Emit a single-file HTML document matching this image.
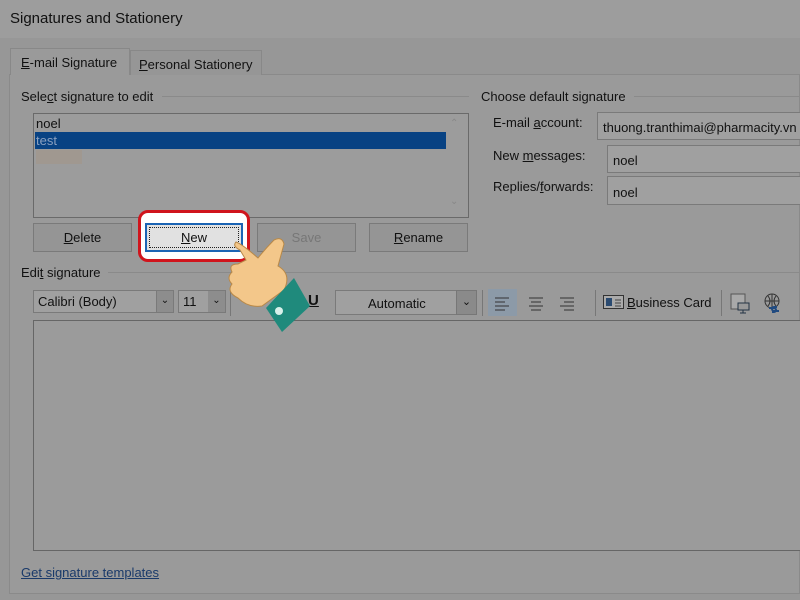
<!DOCTYPE html>
<html><head><meta charset="utf-8"><style>
*{box-sizing:border-box;margin:0;padding:0}
body{width:800px;height:600px;overflow:hidden;background:#979797;font-family:"Liberation Sans",sans-serif;font-size:13px;color:#111;position:relative}
.a{position:absolute;white-space:nowrap}
.title{left:0;top:0;width:800px;height:38px;background:#9d9d9d;font-size:15px;padding:10px 0 0 10px;color:#111}
.panel{left:9px;top:74px;width:791px;height:520px;background:#9a9a9a;border:1px solid #8a8a8a}
.tab{border:1px solid #888;border-bottom:none;background:#9a9a9a;padding:6px 10px}
.grp{height:1px;background:#8a8a8a}
.box{background:#9c9c9c;border:1px solid #6a6a6a}
.btn{background:#959595;border:1px solid #7a7a7a;text-align:center;height:29px;line-height:27px;font-size:13px}
u{text-decoration:underline}
.sel{background:#a0a0a0;border:1px solid #7a7a7a;padding:4px 5px}
</style></head><body>
<div class="a title">Signatures and Stationery</div>
<div class="a panel"></div>
<div class="a tab" style="left:10px;top:48px;width:120px;height:27px;border-bottom:none;background:#9a9a9a;z-index:2"><u>E</u>-mail Signature</div>
<div class="a tab" style="left:130px;top:50px;width:132px;height:25px;background:#969696;padding:6px 8px"><u>P</u>ersonal Stationery</div>
<div class="a" style="left:21px;top:89px">Sele<u>c</u>t signature to edit</div>
<div class="a grp" style="left:162px;top:96px;width:307px"></div>
<div class="a box" style="left:33px;top:113px;width:436px;height:105px"></div>
<div class="a" style="left:36px;top:116px">noel</div>
<div class="a" style="left:35px;top:132px;width:411px;height:17px;background:#084283;color:#8aa0c0;padding:1px 0 0 1px">test</div>
<div class="a" style="left:36px;top:150px;width:46px;height:14px;background:#a09890"></div>
<div class="a" style="left:450px;top:118px;color:#888;font-size:10px">&#8963;</div>
<div class="a" style="left:450px;top:196px;color:#888;font-size:10px">&#8964;</div>
<div class="a btn" style="left:33px;top:223px;width:99px"><u>D</u>elete</div>
<div class="a btn" style="left:257px;top:223px;width:99px;color:#777">Save</div>
<div class="a btn" style="left:369px;top:223px;width:99px"><u>R</u>ename</div>
<div class="a" style="left:138px;top:210px;width:112px;height:52px;border:3px solid #d0141c;border-radius:10px;background:#fff"></div>
<div class="a" style="left:145px;top:223px;width:98px;height:29px;border:2px solid #1b64b4;background:#e1e1e1;padding:2px"><div style="border:1px dotted #222;height:21px;text-align:center;line-height:19px"><u>N</u>ew</div></div>
<div class="a" style="left:481px;top:89px">Choose default signature</div>
<div class="a grp" style="left:634px;top:96px;width:166px"></div>
<div class="a" style="left:493px;top:115px">E-mail <u>a</u>ccount:</div>
<div class="a sel" style="left:597px;top:112px;width:210px;height:28px;padding-top:7px">thuong.tranthimai@pharmacity.vn</div>
<div class="a" style="left:493px;top:148px">New <u>m</u>essages:</div>
<div class="a sel" style="left:607px;top:145px;width:200px;height:28px;padding-top:7px">noel</div>
<div class="a" style="left:493px;top:179px">Replies/<u>f</u>orwards:</div>
<div class="a sel" style="left:607px;top:176px;width:200px;height:29px;padding-top:8px">noel</div>
<div class="a" style="left:21px;top:265px">Edi<u>t</u> signature</div>
<div class="a grp" style="left:108px;top:272px;width:692px"></div>
<div class="a sel" style="left:33px;top:290px;width:141px;height:23px;padding:3px 4px">Calibri (Body)</div>
<div class="a" style="left:156px;top:291px;width:17px;height:21px;background:#8d8d8d;border-left:1px solid #7a7a7a;text-align:center;font-size:10px;line-height:20px">&#8964;</div>
<div class="a sel" style="left:178px;top:290px;width:48px;height:23px;padding:3px 4px">11</div>
<div class="a" style="left:208px;top:291px;width:17px;height:21px;background:#8d8d8d;text-align:center;font-size:10px;line-height:20px">&#8964;</div>
<div class="a" style="left:230px;top:290px;width:1px;height:26px;background:#777"></div>
<div class="a" style="left:308px;top:292px;font-weight:bold;font-size:15px"><u>U</u></div>
<div class="a sel" style="left:335px;top:290px;width:142px;height:25px;padding:5px 0 0 32px">Automatic</div>
<div class="a" style="left:456px;top:290px;width:21px;height:25px;background:#8a8a8a;border:1px solid #777;text-align:center;line-height:22px;font-size:11px">&#8964;</div>
<div class="a" style="left:482px;top:290px;width:1px;height:26px;background:#777"></div>
<div class="a" style="left:488px;top:289px;width:29px;height:27px;background:#8c9aa8"></div>
<svg class="a" style="left:488px;top:289px" width="100" height="27"><g stroke="#333" stroke-width="1"><path d="M7 9h14M7 13h10M7 17h14M7 21h10"/><path d="M41 9h14M43 13h10M41 17h14M43 21h10"/><path d="M72 9h14M76 13h10M72 17h14M76 21h10"/></g></svg>
<div class="a" style="left:595px;top:290px;width:1px;height:26px;background:#777"></div>
<svg class="a" style="left:603px;top:295px" width="22" height="15"><rect x="0.5" y="0.5" width="20" height="13" fill="#aaa" stroke="#333"/><rect x="3" y="3" width="6" height="8" fill="#2a4a70"/><path d="M12 5h6M12 8h6M12 11h6" stroke="#444"/></svg>
<div class="a" style="left:627px;top:295px"><u>B</u>usiness Card</div>
<div class="a" style="left:721px;top:290px;width:1px;height:26px;background:#777"></div>
<svg class="a" style="left:730px;top:293px" width="22" height="22"><rect x="1" y="1" width="14" height="15" fill="#a9a9a9" stroke="#555"/><rect x="8" y="10" width="11" height="7" fill="#999" stroke="#234"/><path d="M13 17v3M10 20h6" stroke="#234"/></svg>
<svg class="a" style="left:763px;top:293px" width="20" height="22"><circle cx="9" cy="8" r="7" fill="none" stroke="#333"/><path d="M2 8h14M9 1v14M5 3q4 5 0 10M13 3q-4 5 0 10" stroke="#333" fill="none"/><path d="M6 15h5a2 2 0 0 1 0 4h-2M14 14h-3a2 2 0 0 0 0 4h5" stroke="#204a80" stroke-width="2" fill="none"/></svg>
<div class="a" style="left:33px;top:320px;width:767px;height:231px;border:1px solid #666;border-right:none;background:#9b9b9b"></div>
<div class="a" style="left:21px;top:565px;color:#1a3a6a;text-decoration:underline">Get signature templates</div>
<svg class="a" style="left:222px;top:236px" width="90" height="100" viewBox="0 0 90 100">
<path d="M18 14 Q10 10 14 6 Q20 8 36 22 Q44 12 52 4 Q60 0 62 8 L56 30 Q70 38 62 54 L40 70 Q26 72 16 62 Q4 56 10 48 Q4 42 10 36 Q6 28 16 28 L24 24 Z" fill="#f3c78a" stroke="#b98948" stroke-width="1"/>
<path d="M44 72 L72 42 L88 70 L60 96 Z" fill="#1f8a7c"/>
<circle cx="57" cy="75" r="4" fill="#d8f0ea"/>
</svg>
</body></html>
